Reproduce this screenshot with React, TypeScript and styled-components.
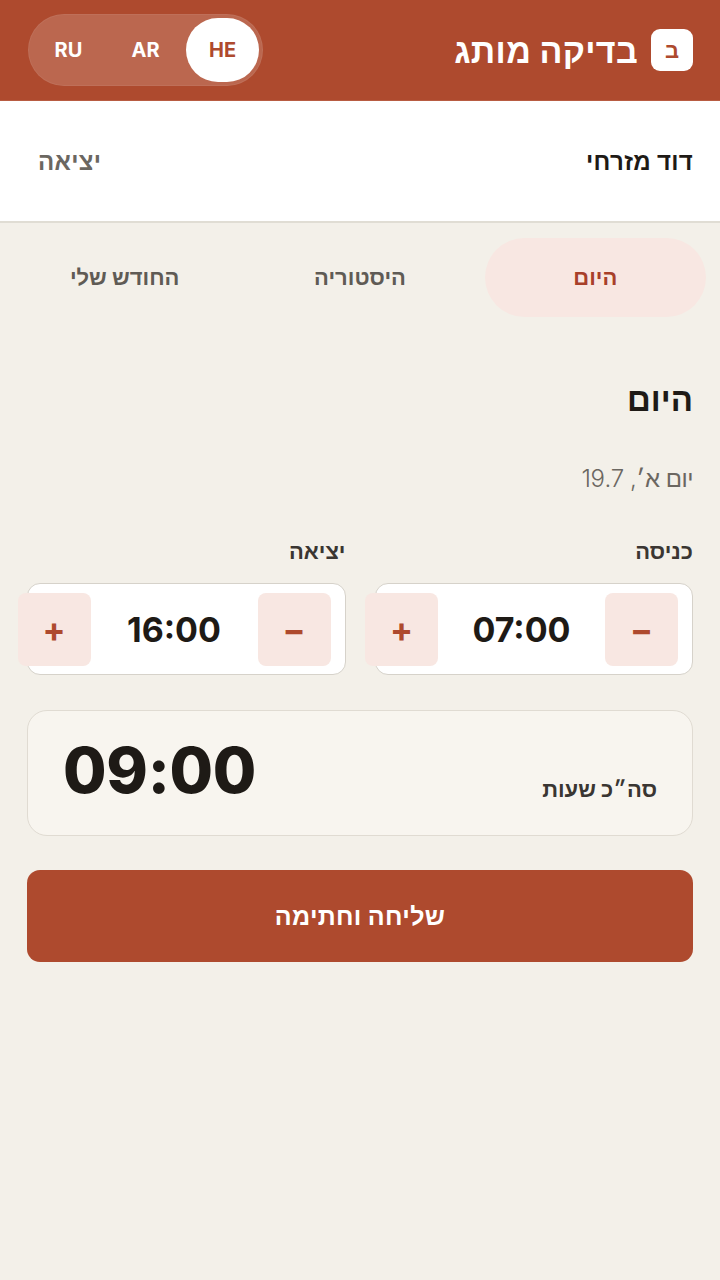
import React, { useState } from "react";
import styled, { createGlobalStyle } from "styled-components";

const GlobalStyle = createGlobalStyle`
  html, body {
    margin: 0;
    padding: 0;
    background: #f3f0e9;
  }
  body {
    font-family: Inter, "Liberation Sans", "Noto Sans", sans-serif;
    color: #1e1a16;
  }
  * { box-sizing: border-box; }
`;

const Page = styled.div`
  direction: rtl;
  min-height: 1280px;
  background: #f3f0e9;
`;

const Header = styled.header`
  height: 101px;
  background: #ae4a2e;
  display: flex;
  align-items: center;
  justify-content: space-between;
  padding: 0 27px 0 28px;
  border-bottom: 1px solid #b85c42;
`;

const Brand = styled.div`
  display: flex;
  align-items: center;
  gap: 13px;
`;

const BrandMark = styled.div`
  width: 42px;
  height: 42px;
  border-radius: 9px;
  background: #fff;
  color: #ae4a2e;
  display: flex;
  align-items: center;
  justify-content: center;
  font-weight: 700;
  font-size: 22px;
`;

const BrandName = styled.div`
  color: #fff;
  font-weight: 700;
  font-size: 34px;
  letter-spacing: 0.3px;
`;

const LangSwitch = styled.div`
  direction: ltr;
  display: flex;
  gap: 4px;
  padding: 4px;
  border-radius: 40px;
  background: rgba(255, 255, 255, 0.16);
  box-shadow: inset 0 0 0 1px rgba(255, 255, 255, 0.06);
`;

const LangButton = styled.button<{ $active?: boolean }>`
  width: 73px;
  height: 64px;
  border: none;
  border-radius: 32px;
  font-family: Inter, "Liberation Sans", sans-serif;
  font-weight: 700;
  font-size: 20px;
  cursor: pointer;
  background: ${(p) => (p.$active ? "#fff" : "transparent")};
  color: ${(p) => (p.$active ? "#ae4a2e" : "#fff")};
`;

const UserBar = styled.div`
  height: 122px;
  background: #fff;
  border-bottom: 2px solid #e0ddd4;
  display: flex;
  align-items: center;
  justify-content: space-between;
  padding: 0 27px 0 38px;
`;

const UserName = styled.div`
  font-weight: 700;
  font-size: 24px;
  letter-spacing: 0.3px;
  color: #1e1a16;
`;

const LogoutLink = styled.button`
  border: none;
  background: none;
  padding: 0;
  font-family: inherit;
  font-weight: 700;
  font-size: 24px;
  letter-spacing: 0.3px;
  color: #6b6761;
  cursor: pointer;
`;

const Tabs = styled.nav`
  display: grid;
  grid-template-columns: repeat(3, minmax(0, 1fr));
  gap: 14px;
  padding: 15px 14px 0;
`;

const Tab = styled.button<{ $active?: boolean }>`
  height: 79px;
  border: none;
  border-radius: 40px;
  font-family: inherit;
  font-weight: 700;
  font-size: 22px;
  cursor: pointer;
  background: ${(p) => (p.$active ? "#f8e7e2" : "transparent")};
  color: ${(p) => (p.$active ? "#a8402a" : "#5f5b55")};
`;

const Content = styled.main`
  padding: 0 27px;
  display: flex;
  flex-direction: column;
`;

const Heading = styled.h1`
  margin: 62px 0 0;
  font-size: 33px;
  line-height: 40px;
  font-weight: 800;
  color: #1e1a16;
`;

const DateLine = styled.div`
  margin-top: 44px;
  font-size: 24px;
  line-height: 32px;
  font-weight: 300;
  letter-spacing: -0.5px;
  color: #6b6761;
`;

const Fields = styled.div`
  margin-top: 42px;
  display: grid;
  grid-template-columns: repeat(2, minmax(0, 1fr));
  gap: 29px;
`;

const Field = styled.div`
  min-width: 0;
  display: flex;
  flex-direction: column;
  gap: 18px;
`;

const FieldLabel = styled.div`
  font-size: 22px;
  line-height: 28px;
  font-weight: 700;
  color: #3a3632;
`;

const Stepper = styled.div`
  height: 92px;
  background: #fff;
  border: 1px solid #d6d2ca;
  border-radius: 13px;
  display: flex;
  align-items: center;
  padding: 0 14px;
`;

const StepButton = styled.button`
  flex: 0 0 73px;
  height: 73px;
  border: none;
  border-radius: 8px;
  background: #f8e7e2;
  color: #ae4a2e;
  font-family: Inter, "Liberation Sans", sans-serif;
  font-size: 34px;
  font-weight: 700;
  display: flex;
  align-items: center;
  justify-content: center;
  cursor: pointer;
  padding: 0;
`;

const StepValue = styled.div`
  flex: 0 0 167px;
  text-align: center;
  direction: ltr;
  font-family: Inter, "Liberation Sans", sans-serif;
  font-weight: 700;
  font-size: 34px;
  color: #1e1a16;
`;

const TotalCard = styled.section`
  margin-top: 35px;
  height: 126px;
  background: #f8f5ef;
  border: 1px solid #e0dbd2;
  border-radius: 20px;
  display: flex;
  align-items: center;
  justify-content: space-between;
  padding: 0 35px 0 35px;
`;

const TotalLabel = styled.div`
  font-size: 22px;
  font-weight: 700;
  color: #3a3632;
  margin-top: 32px;
`;

const TotalValue = styled.div`
  direction: ltr;
  font-family: Inter, "Liberation Sans", sans-serif;
  font-weight: 800;
  font-size: 63px;
  letter-spacing: -0.3px;
  color: #1e1a16;
  margin-top: -6px;
`;

const SubmitButton = styled.button`
  margin-top: 34px;
  height: 92px;
  border: none;
  border-radius: 13px;
  background: #ae4a2e;
  color: #fff;
  font-family: inherit;
  font-weight: 700;
  font-size: 25px;
  letter-spacing: 0.3px;
  cursor: pointer;
`;

const pad = (n: number) => String(n).padStart(2, "0");
const fmt = (mins: number) => `${pad(Math.floor(mins / 60))}:${pad(mins % 60)}`;

function TimeStepper({ value, onChange }: { value: number; onChange: (v: number) => void }) {
  return (
    <Stepper>
      <StepButton aria-label="decrease" onClick={() => onChange(Math.max(0, value - 15))}>
        −
      </StepButton>
      <StepValue>{fmt(value)}</StepValue>
      <StepButton aria-label="increase" onClick={() => onChange(Math.min(24 * 60 - 15, value + 15))}>
        +
      </StepButton>
    </Stepper>
  );
}

export default function App() {
  const [lang, setLang] = useState("HE");
  const [tab, setTab] = useState(0);
  const [entry, setEntry] = useState(7 * 60);
  const [exit, setExit] = useState(16 * 60);
  const total = Math.max(0, exit - entry);

  return (
    <>
      <GlobalStyle />
      <Page>
        <Header>
          <Brand>
            <BrandMark>ב</BrandMark>
            <BrandName>בדיקה מותג</BrandName>
          </Brand>
          <LangSwitch>
            {["RU", "AR", "HE"].map((l) => (
              <LangButton key={l} $active={lang === l} onClick={() => setLang(l)}>
                {l}
              </LangButton>
            ))}
          </LangSwitch>
        </Header>

        <UserBar>
          <UserName>דוד מזרחי</UserName>
          <LogoutLink>יציאה</LogoutLink>
        </UserBar>

        <Tabs>
          {["היום", "היסטוריה", "החודש שלי"].map((t, i) => (
            <Tab key={t} $active={tab === i} onClick={() => setTab(i)}>
              {t}
            </Tab>
          ))}
        </Tabs>

        <Content>
          <Heading>היום</Heading>
          <DateLine>יום א׳, 19.7</DateLine>

          <Fields>
            <Field>
              <FieldLabel>כניסה</FieldLabel>
              <TimeStepper value={entry} onChange={setEntry} />
            </Field>
            <Field>
              <FieldLabel>יציאה</FieldLabel>
              <TimeStepper value={exit} onChange={setExit} />
            </Field>
          </Fields>

          <TotalCard>
            <TotalLabel>סה״כ שעות</TotalLabel>
            <TotalValue>{fmt(total)}</TotalValue>
          </TotalCard>

          <SubmitButton>שליחה וחתימה</SubmitButton>
        </Content>
      </Page>
    </>
  );
}
